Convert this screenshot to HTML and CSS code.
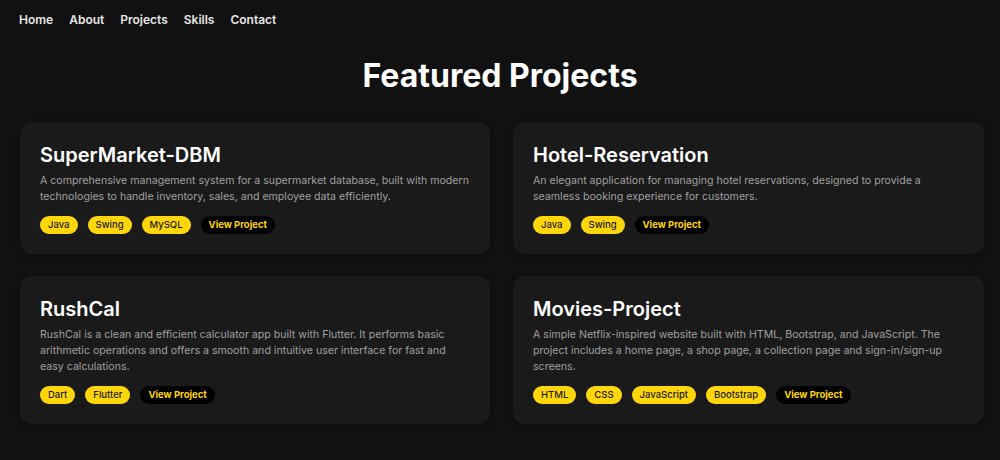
FILE: index.html
```html
<!DOCTYPE html>
<html>
<head>
<meta charset="utf-8">
<link rel="stylesheet" href="styles.css">
</head>
<body>
<nav class="nav">
  <a href="#">Home</a>
  <a href="#">About</a>
  <a href="#">Projects</a>
  <a href="#">Skills</a>
  <a href="#">Contact</a>
</nav>
<h2 class="heading">Featured Projects</h2>
<div class="grid">
  <div class="card">
    <h3 class="title">SuperMarket-DBM</h3>
    <p class="desc">A comprehensive management system for a supermarket database, built with modern technologies to handle inventory, sales, and employee data efficiently.</p>
    <div class="tags"><span class="tag">Java</span><span class="tag">Swing</span><span class="tag">MySQL</span><a class="view" href="#">View Project</a></div>
  </div>
  <div class="card">
    <h3 class="title">Hotel-Reservation</h3>
    <p class="desc">An elegant application for managing hotel reservations, designed to provide a seamless booking experience for customers.</p>
    <div class="tags"><span class="tag">Java</span><span class="tag">Swing</span><a class="view" href="#">View Project</a></div>
  </div>
  <div class="card">
    <h3 class="title">RushCal</h3>
    <p class="desc">RushCal is a clean and efficient calculator app built with Flutter. It performs basic arithmetic operations and offers a smooth and intuitive user interface for fast and easy calculations.</p>
    <div class="tags"><span class="tag">Dart</span><span class="tag">Flutter</span><a class="view" href="#">View Project</a></div>
  </div>
  <div class="card">
    <h3 class="title">Movies-Project</h3>
    <p class="desc">A simple Netflix-inspired website built with HTML, Bootstrap, and JavaScript. The project includes a home page, a shop page, a collection page and sign-in/sign-up screens.</p>
    <div class="tags"><span class="tag">HTML</span><span class="tag">CSS</span><span class="tag">JavaScript</span><span class="tag">Bootstrap</span><a class="view" href="#">View Project</a></div>
  </div>
</div>
</body>
</html>
```
FILE: styles.css
```css
* { box-sizing: border-box; }
html, body { margin: 0; background: #111111; }
body { font-family: Inter, "Noto Sans", sans-serif; color: #fff; width: 1000px; height: 460px; overflow: hidden; }
.nav { display: flex; gap: 16px; padding: 12px 19px; }
.nav a { color: #e6e6e6; text-decoration: none; font-size: 12px; font-weight: 600; line-height: 16px; }
.heading { margin: 18px 0 28px; text-align: center; font-size: 32px; line-height: 36px; font-weight: 700; color: #fff; }
.grid { display: grid; grid-template-columns: 470px 471px; column-gap: 23px; row-gap: 22px; padding-left: 20px; align-items: start; }
.card { background: #1a1a1a; border-radius: 12px; padding: 20px; box-shadow: 0 2px 8px rgba(0,0,0,0.25); }
.title { margin: 0 0 5px; font-size: 20px; line-height: 26px; font-weight: 600; color: #fff; }
.desc { margin: 0 0 11px; font-size: 10.6px; line-height: 16px; color: #a0a0a0; }
.tags { display: flex; gap: 10px; }
.tag, .view { display: inline-flex; align-items: center; height: 18px; padding: 0 8px; border-radius: 9px; font-size: 9.5px; line-height: 12px; }
.tag { background: #ffd60a; color: #1a1a1a; font-weight: 500; }
.view { background: #000; color: #ffd60a; font-weight: 700; text-decoration: none; }
```
